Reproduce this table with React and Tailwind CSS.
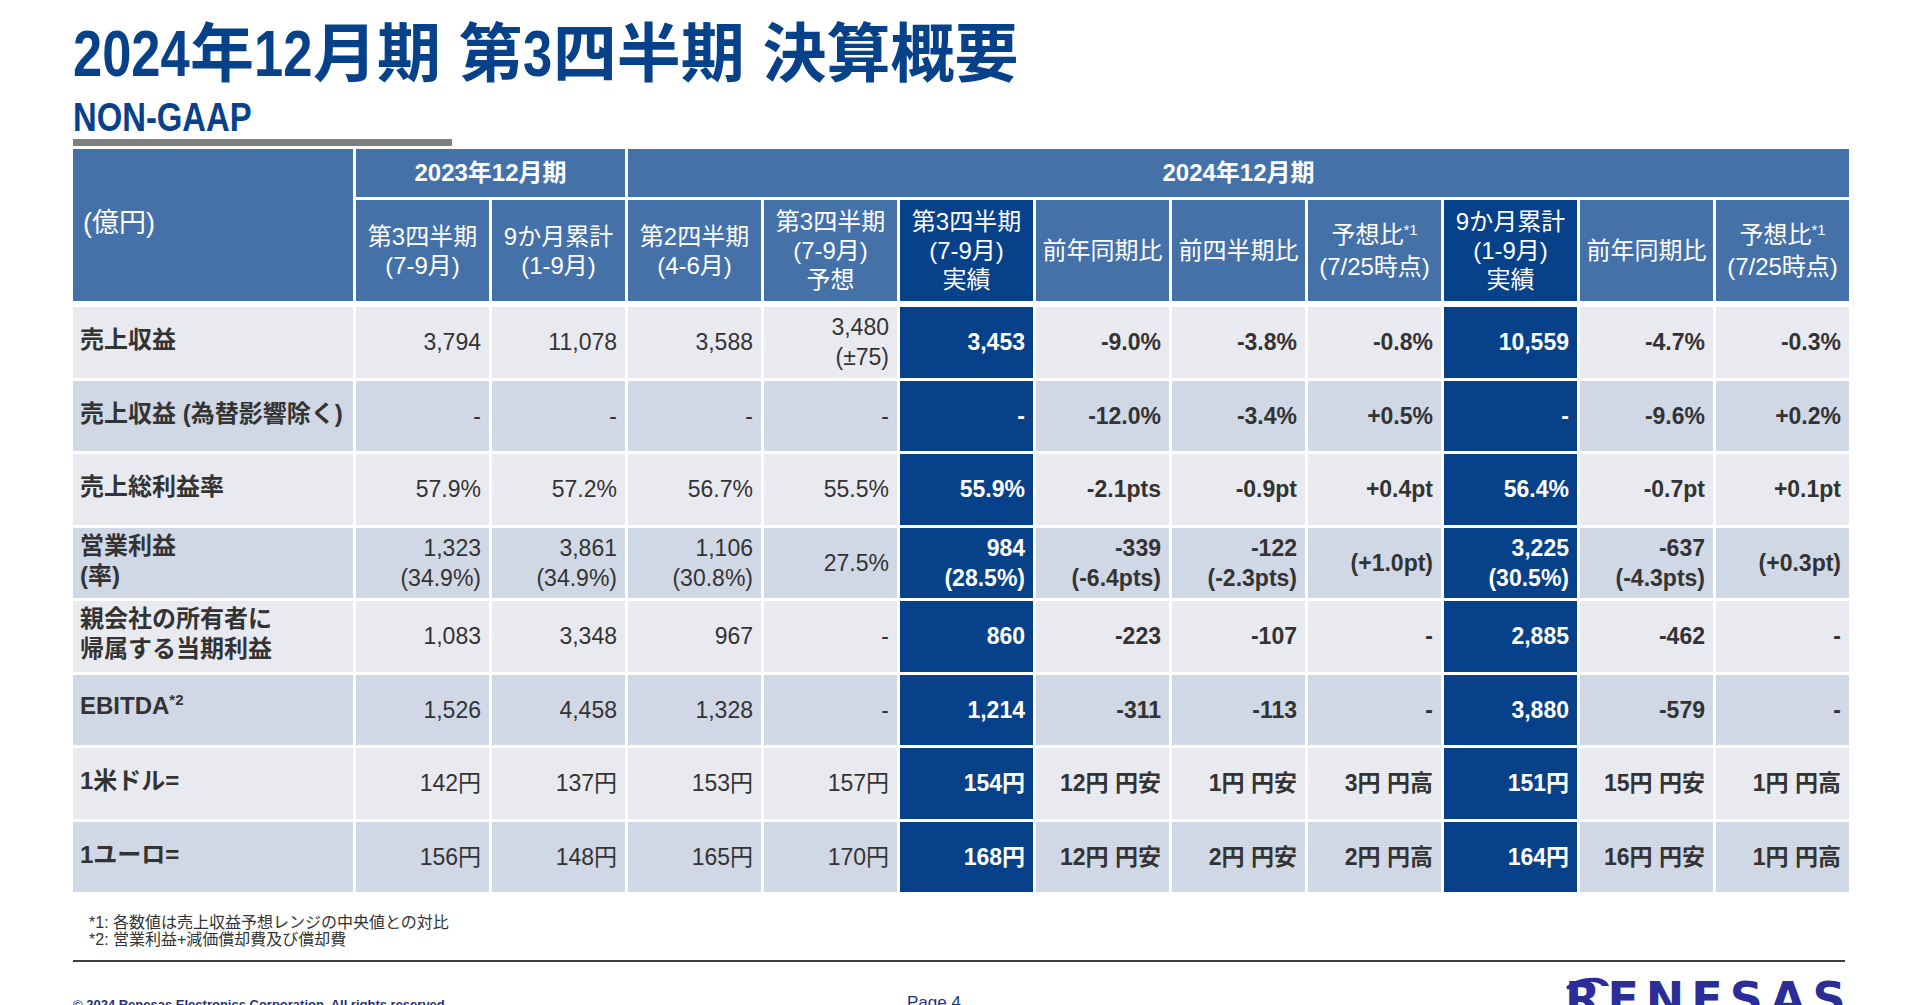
import React from "react";

const heads = [
  { t: "第3四半期\n(7-9月)" },
  { t: "9か月累計\n(1-9月)" },
  { t: "第2四半期\n(4-6月)" },
  { t: "第3四半期\n(7-9月)\n予想" },
  { t: "第3四半期\n(7-9月)\n実績", hi: true },
  { t: "前年同期比" },
  { t: "前四半期比" },
  { t: "予想比", sup: "*1", sub: "(7/25時点)" },
  { t: "9か月累計\n(1-9月)\n実績", hi: true },
  { t: "前年同期比" },
  { t: "予想比", sup: "*1", sub: "(7/25時点)" },
];

// column kind: n = normal, h = highlight, b = bold comparison
const kinds = ["n", "n", "n", "n", "h", "b", "b", "b", "h", "b", "b"];

const rows = [
  { label: "売上収益", v: ["3,794", "11,078", "3,588", "3,480\n(±75)", "3,453", "-9.0%", "-3.8%", "-0.8%", "10,559", "-4.7%", "-0.3%"] },
  { label: "売上収益 (為替影響除く)", v: ["-", "-", "-", "-", "-", "-12.0%", "-3.4%", "+0.5%", "-", "-9.6%", "+0.2%"] },
  { label: "売上総利益率", v: ["57.9%", "57.2%", "56.7%", "55.5%", "55.9%", "-2.1pts", "-0.9pt", "+0.4pt", "56.4%", "-0.7pt", "+0.1pt"] },
  { label: "営業利益\n(率)", v: ["1,323\n(34.9%)", "3,861\n(34.9%)", "1,106\n(30.8%)", "27.5%", "984\n(28.5%)", "-339\n(-6.4pts)", "-122\n(-2.3pts)", "(+1.0pt)", "3,225\n(30.5%)", "-637\n(-4.3pts)", "(+0.3pt)"] },
  { label: "親会社の所有者に\n帰属する当期利益", v: ["1,083", "3,348", "967", "-", "860", "-223", "-107", "-", "2,885", "-462", "-"] },
  { label: "EBITDA", sup: "*2", v: ["1,526", "4,458", "1,328", "-", "1,214", "-311", "-113", "-", "3,880", "-579", "-"] },
  { label: "1米ドル=", v: ["142円", "137円", "153円", "157円", "154円", "12円 円安", "1円 円安", "3円 円高", "151円", "15円 円安", "1円 円高"] },
  { label: "1ユーロ=", v: ["156円", "148円", "165円", "170円", "168円", "12円 円安", "2円 円安", "2円 円高", "164円", "16円 円安", "1円 円高"] },
];

function HeadCell({ h }) {
  return (
    <div
      className={`flex flex-col items-center justify-center text-center text-white text-[24px] leading-[29px] whitespace-pre-line ${
        h.hi ? "bg-[#06418A]" : "bg-[#4571A9]"
      }`}
    >
      {h.sup ? (
        <>
          <span>
            {h.t}
            <span className="relative -top-[8px] text-[15px]">{h.sup}</span>
          </span>
          <span>{h.sub}</span>
        </>
      ) : (
        h.t
      )}
    </div>
  );
}

function BodyCell({ v, kind, odd }) {
  let cls = odd ? "bg-[#E9EAEF] text-[#333333]" : "bg-[#D0D7E5] text-[#333333]";
  if (kind === "h") cls = "bg-[#06418A] text-white font-bold";
  if (kind === "b") cls += " font-bold";
  return (
    <div className={`flex items-center justify-end pr-2 text-right text-[23px] leading-[30px] whitespace-pre-line ${cls}`}>
      {v}
    </div>
  );
}

export default function App() {
  return (
    <div className="w-[1920px] h-[1005px] overflow-hidden bg-white pl-[73px] font-['Liberation_Sans','Noto_Sans_CJK_JP',sans-serif]">
      {/* title: latin runs are narrowed like the slide's condensed face */}
      <h1 className="pt-[22px] text-[64px] leading-[64px] font-bold text-[#06418A] whitespace-nowrap">
        <span className="inline-block w-[117px]">
          <span className="inline-block origin-left scale-x-[0.82]">2024</span>
        </span>
        年
        <span className="inline-block w-[59px]">
          <span className="inline-block origin-left scale-x-[0.82]">12</span>
        </span>
        月期 第
        <span className="inline-block w-[30px]">
          <span className="inline-block origin-left scale-x-[0.82]">3</span>
        </span>
        四半期 決算概要
      </h1>
      <div className="mt-[11px] text-[40px] leading-[40px] font-bold text-[#06418A]">
        <span className="inline-block origin-left scale-x-[0.82]">NON-GAAP</span>
      </div>
      <div className="mt-[2px] h-[7px] w-[379px] bg-[#7F7F7F]" />

      {/* header */}
      <div className="mt-[3px] grid grid-cols-[280px_repeat(11,133px)] grid-rows-[48px_101px] gap-[3px]">
        <div className="row-span-2 flex items-center bg-[#4571A9] pl-[10px] pb-[3px] text-[27px] text-white">(億円)</div>
        <div className="col-span-2 flex items-center justify-center bg-[#4571A9] text-[24px] font-bold text-white">
          2023年12月期
        </div>
        <div className="col-span-9 flex items-center justify-center bg-[#4571A9] text-[24px] font-bold text-white">
          2024年12月期
        </div>
        {heads.map((h, i) => (
          <HeadCell key={i} h={h} />
        ))}
      </div>

      {/* body */}
      <div className="mt-[6px] grid grid-cols-[280px_repeat(11,133px)] grid-rows-[repeat(8,70.5px)] gap-[3px]">
        {rows.map((r, ri) => {
          const odd = ri % 2 === 0;
          return (
            <React.Fragment key={ri}>
              <div
                className={`flex items-center pl-[7px] pb-[4px] text-[24px] leading-[30px] font-bold text-[#333333] whitespace-pre-line ${
                  odd ? "bg-[#E9EAEF]" : "bg-[#D0D7E5]"
                }`}
              >
                <span>
                  {r.label}
                  {r.sup && <span className="relative -top-[9px] text-[15px]">{r.sup}</span>}
                </span>
              </div>
              {r.v.map((v, ci) => (
                <BodyCell key={ci} v={v} kind={kinds[ci]} odd={odd} />
              ))}
            </React.Fragment>
          );
        })}
      </div>

      {/* notes */}
      <div className="mt-[22px] pl-[16px] text-[16px] leading-[17px] text-[#333333]">
        <div>*1: 各数値は売上収益予想レンジの中央値との対比</div>
        <div>*2: 営業利益+減価償却費及び償却費</div>
      </div>
      <div className="mt-[12px] h-[2px] w-[1772px] bg-[#404040]" />

      {/* footer */}
      <div className="flex items-start">
        <div className="w-[834px] mt-[36px] text-[13px] leading-[14px] font-bold text-[#1F2F7A] whitespace-nowrap">
          © 2024 Renesas Electronics Corporation. All rights reserved
        </div>
        <div className="w-[658px] mt-[31px] text-[17px] leading-[20px] text-[#1F2F7A]">Page 4</div>
        <div className="relative mt-[14px] flex items-start text-[#2B2D98]">
          <svg width="44" height="14" viewBox="0 0 44 14" className="absolute left-[1px] top-[1px]">
            <path d="M0 10 C8 3 20 0 32 1 C38 2 42 5 43 9 L36 9 C34 6 30 5 24 5 C14 5 6 8 2 13 Z" fill="#2B2D98" />
          </svg>
          <span className="text-[46px] leading-[46px] font-bold tracking-[7px] font-['DejaVu_Sans',sans-serif]">
            RENESAS
          </span>
        </div>
      </div>
    </div>
  );
}
